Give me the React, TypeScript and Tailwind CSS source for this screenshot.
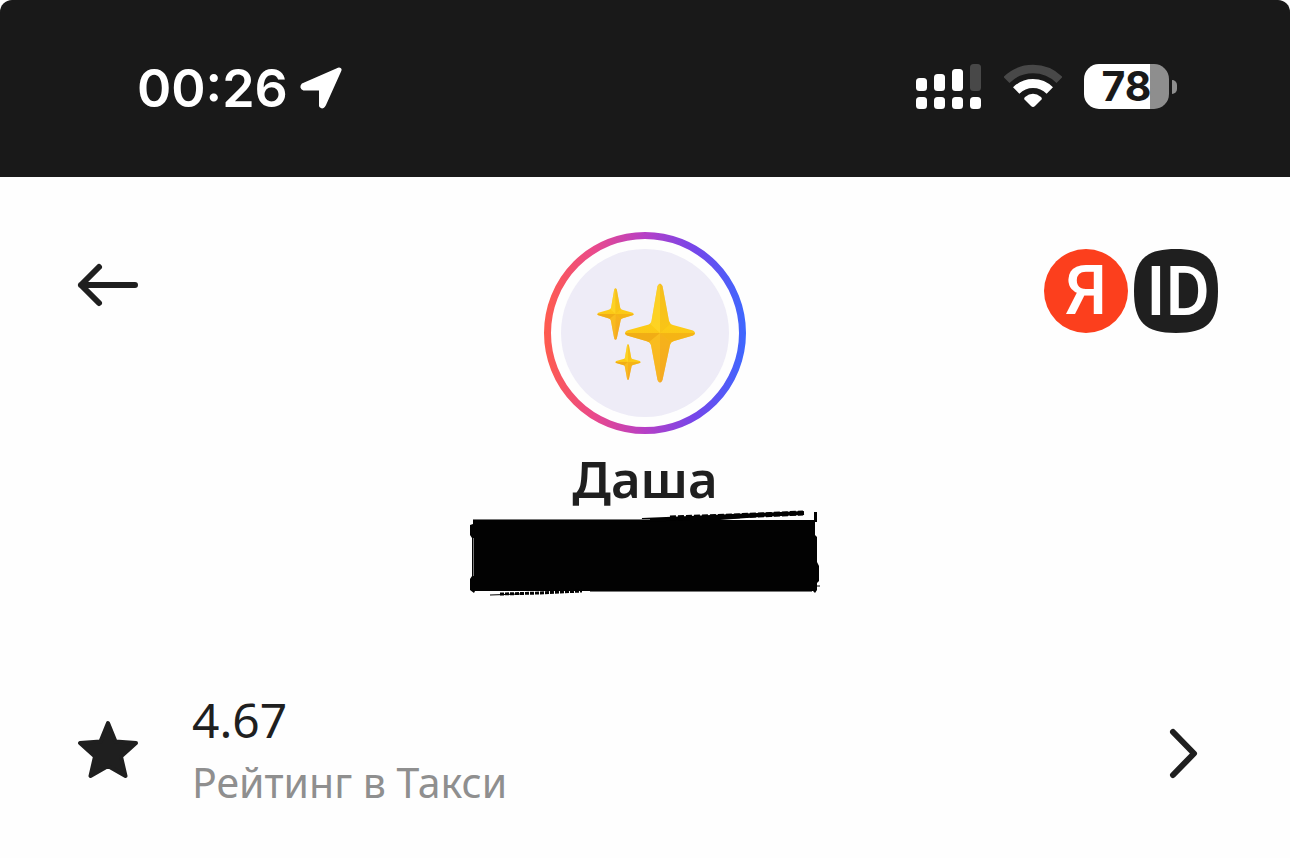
interface SparkProps {
    x: number
    y: number
    scale: number
}

const Spark: React.FC<SparkProps> = ({ x, y, scale }: SparkProps) => (
    <g transform={`translate(${x} ${y}) scale(${scale})`}>
        <path
            fill="url(#spark-body)"
            d="M-2.500 -47Q0 -52 2.500 -47L9 -12Q10 -9 13 -8L33 -2.500Q37 0 33 2.500L14 8Q11 9 10 12L2.500 47Q0 52 -2.500 47L-9 12Q-10 9 -14 8L-33 2.500Q-37 0 -33 -2.500L-13 -8Q-9 -9 -8.500 -12Z"
        />
        <path fill="#f3a51c" opacity="0.6" d="M0 0L11 9Q10 10 10 12L2.500 47Q1.500 49.500 0 49.500Z" />
        <path fill="#f9b822" opacity="0.6" d="M0 0L-11 9Q-10 10 -9 12L-2.500 47Q-1.500 49.500 0 49.500Z" />
        <path fill="#eda314" opacity="0.7" d="M0 0L-11 9L-14 8L-33 2.500Q-35 1.500 -35 0Z" />
        <path fill="#f2ac14" opacity="0.7" d="M0 0L11 9L14 8L33 2.500Q35 1.500 35 0Z" />
        <path fill="#ffd92c" opacity="0.6" d="M0 0L-10 -9L-8.500 -12L-2.500 -47L0 -49Z" />
        <path fill="#f5bd17" opacity="0.5" d="M0 0L10 -9L9 -12L2.500 -47L0 -49Z" />
    </g>
)

const Avatar: React.FC = () => (
    <svg className="size-[202px]" viewBox="0 0 202 202" fill="none" aria-hidden="true">
        <defs>
            <linearGradient id="ring" x1="0" y1="0" x2="202" y2="0" gradientUnits="userSpaceOnUse">
                <stop offset="0" stopColor="#ff5c4d" />
                <stop offset="0.25" stopColor="#e9498c" />
                <stop offset="0.5" stopColor="#b63fc6" />
                <stop offset="0.75" stopColor="#7446ea" />
                <stop offset="1" stopColor="#3d68ff" />
            </linearGradient>
            <linearGradient id="spark-body" x1="0" y1="-50" x2="0" y2="50" gradientUnits="userSpaceOnUse">
                <stop offset="0" stopColor="#f5c026" />
                <stop offset="0.45" stopColor="#fccb16" />
                <stop offset="1" stopColor="#f6ad2c" />
            </linearGradient>
        </defs>
        <circle cx="101" cy="101" r="97.5" stroke="url(#ring)" strokeWidth="7" />
        <circle cx="101" cy="101" r="84" fill="#eeecf7" />
        <Spark x={116} y={101} scale={1} />
        <Spark x={71.5} y={82} scale={0.52} />
        <Spark x={84} y={130} scale={0.36} />
    </svg>
)

const StatusBar: React.FC = () => (
    <div className="flex h-[177px] items-center justify-between rounded-t-xl bg-[#191919] pl-[137px] pr-[113px] text-white">
        <div className="flex items-center gap-3">
            <span className="font-[Inter,sans-serif] text-[52px] leading-[64px] font-semibold">00:26</span>
            <svg className="size-[43px]" viewBox="0 0 43 43" fill="currentColor" stroke="currentColor" strokeWidth="5" strokeLinejoin="round" aria-hidden="true">
                <path d="M39 3L3.500 18.500Q2 20.500 4 21H21.500V38.500Q22.500 39.500 23.500 37.500Z" />
            </svg>
        </div>
        <div className="flex items-center gap-[22px] pb-1">
            <svg className="h-[45px] w-[66px]" viewBox="0 0 66 45" fill="currentColor" aria-hidden="true">
                <rect x="0" y="14" width="11" height="13" rx="3.500" />
                <rect x="18" y="10" width="11" height="17" rx="3.500" />
                <rect x="36" y="5" width="11" height="22" rx="3.500" />
                <rect x="54" y="0" width="11" height="27" rx="3.500" fill="#484848" />
                <rect x="0" y="33" width="11" height="12" rx="3.500" />
                <rect x="18" y="33" width="11" height="12" rx="3.500" />
                <rect x="36" y="33" width="11" height="12" rx="3.500" />
                <rect x="54" y="33" width="11" height="12" rx="3.500" />
            </svg>
            <svg className="h-[45px] w-[58px]" viewBox="0 0 58 45" fill="none" aria-hidden="true">
                <path d="M2.500 16A37.500 37.500 0 0 1 55.500 16" stroke="#484848" strokeWidth="8.500" />
                <path d="M12.200 26.500A23.800 23.800 0 0 1 45.800 26.500" stroke="currentColor" strokeWidth="9" />
                <path d="M29 43Q28 43 27 42L20.500 35.500Q19.500 34.300 21 33Q29 26.500 37 33Q38.500 34.300 37.500 35.500L31 42Q30 43 29 43Z" fill="currentColor" />
            </svg>
            <div className="flex items-center gap-[3px]">
                <div className="flex h-[45px] w-[85px] items-center justify-center rounded-[15px] bg-linear-to-r from-white from-78% to-[#8e8e8e] to-78%">
                    <span className="font-[Inter,sans-serif] text-[41px] leading-[45px] font-bold text-[#191919]">78</span>
                </div>
                <div className="h-[14px] w-[5px] rounded-r-full bg-[#8e8e8e]" />
            </div>
        </div>
    </div>
)

const YandexId: React.FC = () => (
    <a href="#id" aria-label="Яндекс ID" className="flex gap-[6px] font-[Roboto,sans-serif] text-[68px] leading-[84px] font-medium text-white">
        <span className="flex size-[84px] justify-center rounded-full bg-[#fc3f1d]">Я</span>
        <svg className="size-[84px]" viewBox="0 0 84 84" aria-hidden="true">
            <path fill="#1f1f1f" d="M42 0C73 0 84 11 84 42S73 84 42 84S0 73 0 42S11 0 42 0Z" />
            <text x="44" y="66" textAnchor="middle" fill="currentColor">ID</text>
        </svg>
    </a>
)

const Redaction: React.FC = () => (
    <svg className="h-[86px] w-[350px]" viewBox="0 0 350 86" aria-hidden="true">
        <path fill="#020202" d="M3 10H345V25L347 27V52L349 56V71L347 73V80L345 83L343 81H5L4 83L0 80V69L2 66V28L0 25V15L3 14Z" />
        <path fill="none" stroke="#020202" strokeWidth="3" d="M345.500 12V2" />
        <path fill="none" stroke="#020202" strokeWidth="4" d="M172 10L220 8L262 6L300 4.500L334 3" />
        <path fill="#020202" d="M172 10L220 7L262 6L290 7L250 10Z" />
        <path fill="none" stroke="#020202" strokeWidth="5" strokeDasharray="6 2" d="M200 8L262 6L300 4.500L333 3" />
        <path fill="none" stroke="#020202" strokeWidth="1" d="M343 76H350M20 85L50 84" />
        <path fill="none" stroke="#020202" strokeWidth="3" strokeDasharray="4 1" d="M30 84L70 83L112 81" />
        <path fill="none" stroke="#777" strokeWidth="1" d="M3.500 28V66M3 9.500H180M120 81.500H342" />
    </svg>
)

export default function App() {
    return (
        <div className="min-h-screen bg-[#fefefe] font-['Noto_Sans',sans-serif] text-[#1f1f1f]">
            <StatusBar />
            <main className="px-[72px] pt-[55px]">
                <header className="grid grid-cols-[1fr_auto_1fr] items-start">
                    <button type="button" aria-label="Назад" className="mt-[17px] justify-self-start">
                        <svg className="size-[72px]" viewBox="0 0 72 72" fill="none" stroke="currentColor" strokeWidth="6" strokeLinecap="round" strokeLinejoin="round" aria-hidden="true">
                            <path d="M63 36H9M27 18L9 36L27 54" />
                        </svg>
                    </button>
                    <div className="flex flex-col items-center">
                        <Avatar />
                        <h1 className="mt-3 text-[51px] leading-[64px] font-semibold">Даша</h1>
                        <Redaction />
                    </div>
                    <div className="mt-[17px] justify-self-end">
                        <YandexId />
                    </div>
                </header>
                <a href="#rating" className="mt-[92px] flex items-center gap-12">
                    <svg className="size-[72px] shrink-0" viewBox="0 0 72 72" fill="currentColor" stroke="currentColor" strokeWidth="4" strokeLinejoin="round" aria-hidden="true">
                        <path d="M36 9L43.500 27.500L64 29L49 42.500L53.500 62L36 52L18.500 62L23 42.500L8 29L28.500 27.500Z" />
                    </svg>
                    <div className="grow">
                        <div className="text-[48px] leading-[64px]">4.67</div>
                        <div className="text-[41px] leading-[60px] text-[#8f8f8f]">Рейтинг в Такси</div>
                    </div>
                    <svg className="size-[72px] shrink-0" viewBox="0 0 72 72" fill="none" stroke="currentColor" strokeWidth="6" strokeLinecap="round" strokeLinejoin="round" aria-hidden="true">
                        <path d="M27 18L48 39.500L27 61" />
                    </svg>
                </a>
            </main>
        </div>
    )
}
